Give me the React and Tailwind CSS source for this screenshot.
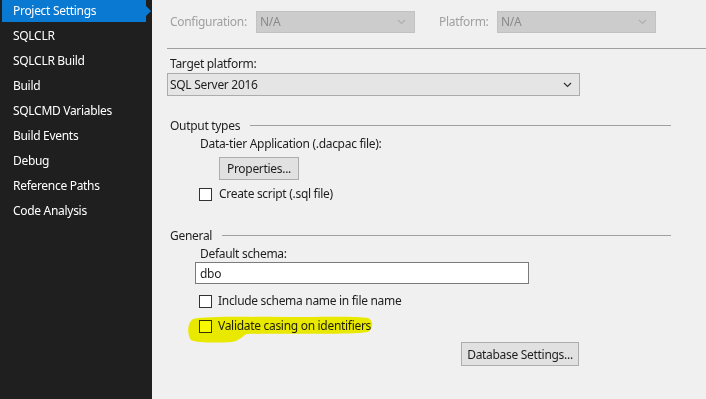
import React from "react";

const font = { fontFamily: '"Noto Sans", "Segoe UI", sans-serif' };

function Chevron({ color = "#333" }) {
  return (
    <svg width="9" height="6" viewBox="0 0 9 6">
      <polyline points="1,1 4.5,4.5 8,1" fill="none" stroke={color} strokeWidth="1.2" />
    </svg>
  );
}

function Checkbox({ transparent }) {
  return (
    <div
      className={
        "w-[13px] h-[13px] border border-[#333333] shrink-0 " +
        (transparent ? "bg-transparent" : "bg-white")
      }
    />
  );
}

const navItems = [
  "SQLCLR",
  "SQLCLR Build",
  "Build",
  "SQLCMD Variables",
  "Build Events",
  "Debug",
  "Reference Paths",
  "Code Analysis",
];

export default function App() {
  return (
    <div
      className="w-[706px] h-[399px] flex overflow-hidden text-[12px] leading-[16px] tracking-[-0.3px] text-[#1e1e1e]"
      style={font}
    >
      {/* Sidebar */}
      <div className="w-[152px] shrink-0 bg-[#1f1f1f] text-white flex flex-col">
        <div className="relative h-[22px] ml-[2px] mr-[6px] bg-[#0a79d2] flex items-center pl-[11px]">
          Project Settings
          <div className="absolute right-[-5px] top-[6px] w-0 h-0 border-y-[5px] border-y-transparent border-l-[5px] border-l-[#0a79d2]" />
        </div>
        {navItems.map((t) => (
          <div key={t} className="h-[25px] flex items-center pl-[13px] pt-[2px]">
            {t}
          </div>
        ))}
      </div>

      {/* Content */}
      <div className="flex-1 bg-[#f0f0f0] flex flex-col pl-[15px]">
        {/* Configuration row */}
        <div className="mt-[10px] h-[22px] flex items-center pt-[1px]">
          <span className="ml-[3px] w-[86px] text-[#a0a0a0]">Configuration:</span>
          <div className="w-[159px] h-[22px] bg-[#cccccc] border border-[#c2c2c2] flex items-center justify-between pl-[3px] pr-[8px] text-[#8a8a8a]">
            <span>N/A</span>
            <Chevron color="#b0b0b0" />
          </div>
          <span className="ml-[24px] w-[58px] text-[#a0a0a0]">Platform:</span>
          <div className="w-[159px] h-[22px] bg-[#cccccc] border border-[#c2c2c2] flex items-center justify-between pl-[3px] pr-[8px] text-[#8a8a8a]">
            <span>N/A</span>
            <Chevron color="#b0b0b0" />
          </div>
        </div>

        <div className="mt-[16px] border-t border-[#a0a0a0]" />

        <div className="mt-[7px] pl-[3px]">Target platform:</div>
        <div className="mt-[1px] w-[413px] h-[23px] bg-[#e5e5e5] border border-[#acacac] flex items-center justify-between pl-[2px] pr-[7px] pt-[1px]">
          <span>SQL Server 2016</span>
          <Chevron color="#333" />
        </div>

        {/* Output types */}
        <div className="mt-[22px] mr-[35px] flex items-center pl-[3px]">
          <span>Output types</span>
          <div className="flex-1 ml-[10px] border-t border-[#a0a0a0] mt-[-2px]" />
        </div>
        <div className="mt-[2px] pl-[33px]">Data-tier Application (.dacpac file):</div>
        <div className="mt-[5px] ml-[52px] w-[80px] h-[23px] bg-[#e1e1e1] border border-[#adadad] flex items-center justify-center pt-[1px]">
          Properties...
        </div>
        <div className="mt-[6px] ml-[32px] flex items-center h-[16px]">
          <Checkbox />
          <span className="ml-[7px]">Create script (.sql file)</span>
        </div>

        {/* General */}
        <div className="mt-[26px] mr-[35px] flex items-center pl-[3px]">
          <span>General</span>
          <div className="flex-1 ml-[10px] border-t border-[#a0a0a0] mt-[-2px]" />
        </div>
        <div className="mt-[2px] pl-[33px]">Default schema:</div>
        <div className="mt-[0px] ml-[28px] w-[334px] h-[22px] bg-white border border-[#7a7a7a] flex items-center pl-[4px] pt-[1px]">
          dbo
        </div>
        <div className="mt-[9px] ml-[32px] flex items-center h-[16px]">
          <Checkbox />
          <span className="ml-[6px]">Include schema name in file name</span>
        </div>
        <div className="relative mt-[9px] ml-[32px] flex items-center h-[16px]">
          <Checkbox />
          <span className="ml-[6px]">Validate casing on identifiers</span>
          <svg
            className="absolute left-[-12px] top-[-3px] mix-blend-multiply pointer-events-none"
            width="196"
            height="30"
            viewBox="0 0 196 30"
          >
            <path
              d="M6 4 C20 1, 60 2, 100 2 C140 2, 170 1, 181 3 C186 5, 187 13, 181 17 C160 20, 120 18, 60 19 C55 21, 54 25, 45 27 C30 28, 10 28, 4 25 C0 20, 0 8, 6 4 Z"
              fill="#f8f800"
            />
          </svg>
        </div>
        <div className="mt-[8px] ml-[294px] w-[118px] h-[24px] bg-[#e1e1e1] border border-[#adadad] flex items-center justify-center pt-[1px]">
          Database Settings...
        </div>
      </div>
    </div>
  );
}
